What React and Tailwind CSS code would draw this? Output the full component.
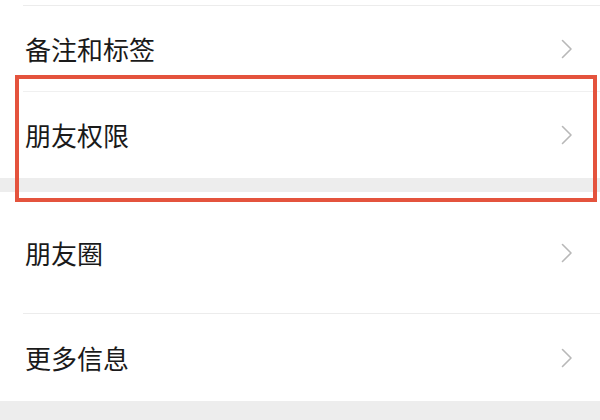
import React from "react";

function Chevron() {
  return (
    <svg width="12" height="20" viewBox="0 0 12 20" className="shrink-0">
      <polyline points="1.5,1.5 10,10 1.5,18.5" fill="none" stroke="#b8b8b8" strokeWidth="1.6" strokeLinecap="round" strokeLinejoin="round" />
    </svg>
  );
}

function Row({ label, h }) {
  return (
    <div className={`flex items-center justify-between pl-[25px] pr-[27px] ${h}`}>
      <span className="text-[26px] leading-none text-[#1a1a1a]">{label}</span>
      <Chevron />
    </div>
  );
}

export default function App() {
  return (
    <div
      className="relative w-[600px] h-[420px] overflow-hidden bg-white flex flex-col"
      style={{ fontFamily: '"Noto Sans CJK SC", "Noto Sans", sans-serif' }}
    >
      <div className="h-[5px] shrink-0" />
      <div className="ml-[23px] h-px bg-[#ececec] shrink-0" />
      <Row label="备注和标签" h="h-[85px] shrink-0" />
      <div className="ml-[23px] h-px bg-[#f0f0f0] shrink-0" />
      <Row label="朋友权限" h="h-[86px] shrink-0" />
      <div className="h-[14px] bg-[#ededed] shrink-0" />
      <Row label="朋友圈" h="h-[121px] shrink-0" />
      <div className="ml-[23px] h-px bg-[#ececec] shrink-0" />
      <Row label="更多信息" h="h-[87px] shrink-0" />
      <div className="flex-1 bg-[#ededed]" />

      <div className="absolute left-[15px] top-[75px] w-[582px] h-[127px] border-4 border-[#e4533d]" />
    </div>
  );
}
